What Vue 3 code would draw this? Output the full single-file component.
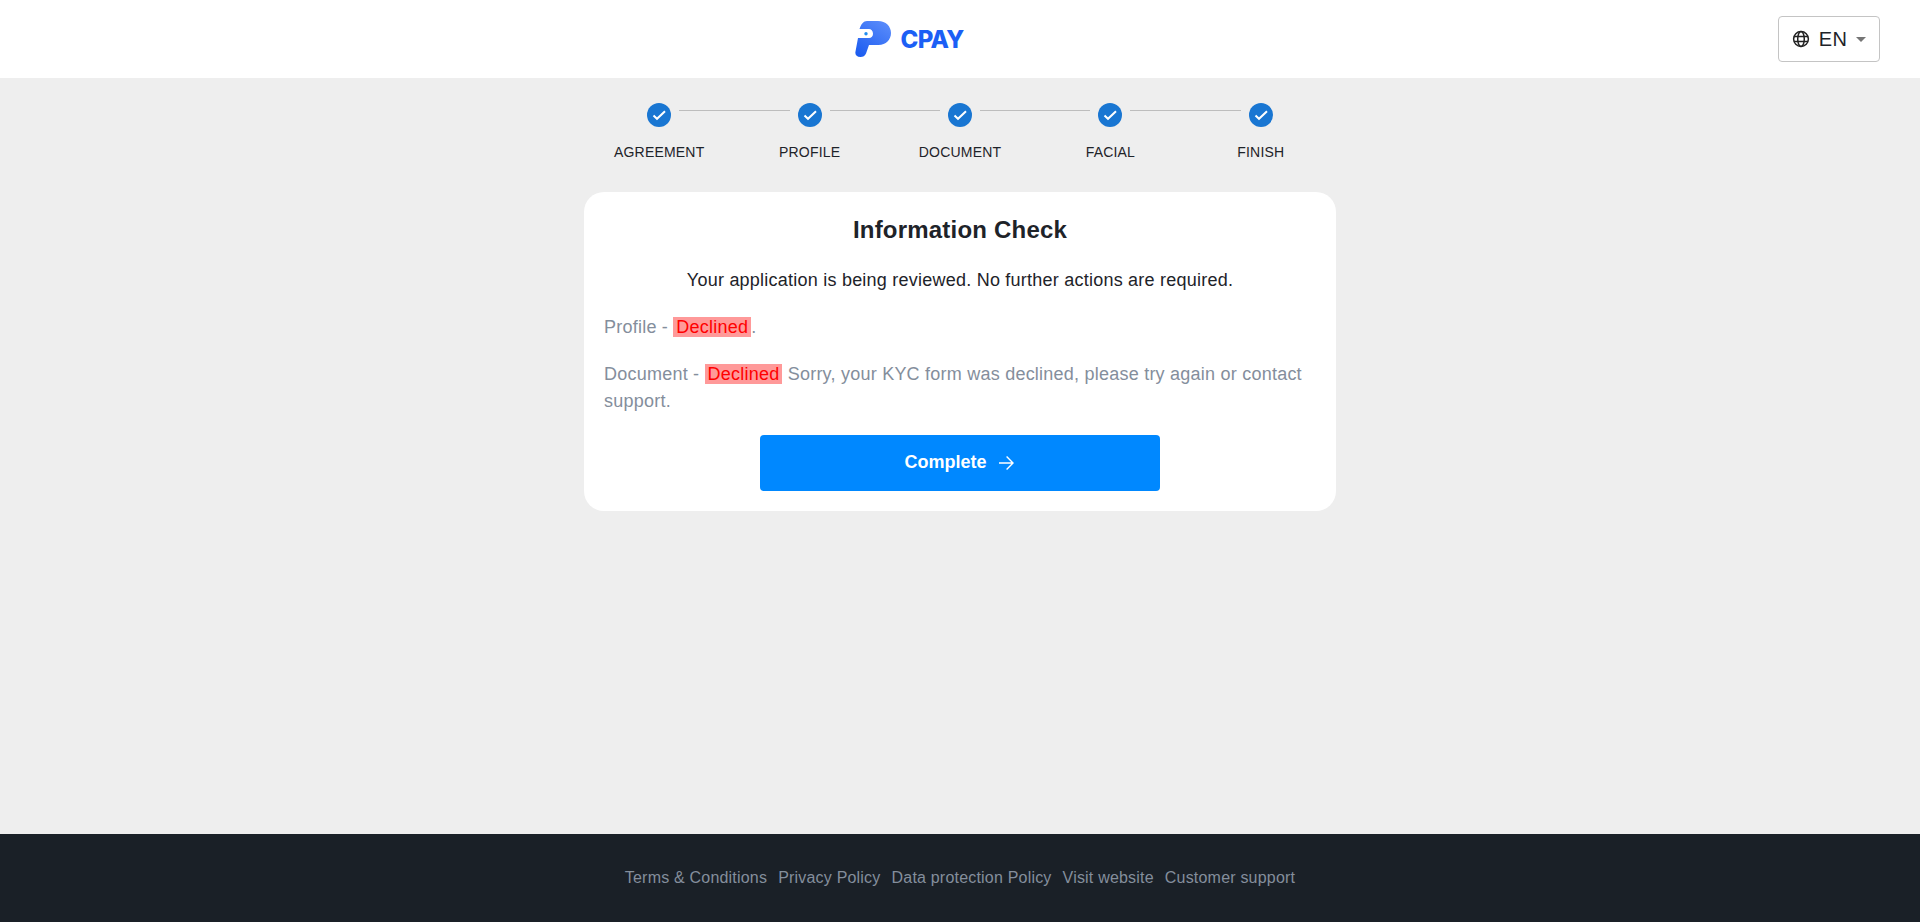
<script setup>
const steps = ['AGREEMENT', 'PROFILE', 'DOCUMENT', 'FACIAL', 'FINISH']
const links = ['Terms & Conditions', 'Privacy Policy', 'Data protection Policy', 'Visit website', 'Customer support']
</script>

<template>
  <div class="page">
    <header class="header">
      <div class="logo">
        <svg width="37" height="36" viewBox="0 0 37 36">
          <defs>
            <linearGradient id="lg" x1="0.85" y1="0" x2="0.2" y2="1">
              <stop offset="0" stop-color="#5a8cfb" />
              <stop offset="1" stop-color="#1d5df0" />
            </linearGradient>
          </defs>
          <path d="M12 0H23C31 0 36 5.5 36 12C36 18.5 31 24 23.5 24H14L11 32.5C10 35 8 36 5.5 36C1.5 36 -0.2 33.5 0.5 30.5L3 17H14C16.5 17 18 15 18 12.7C18 10 16 8 14 8H4.5C6 3 8.5 0 12 0Z" fill="url(#lg)" />
          <circle cx="11" cy="12.7" r="1.7" fill="#1f8cf0" />
        </svg>
        <span class="logo-text">CPAY</span>
      </div>
      <button class="lang">
        <svg width="18" height="18" viewBox="0 0 18 18" fill="none" stroke="#222" stroke-width="1.5">
          <circle cx="9" cy="9" r="7.4" />
          <ellipse cx="9" cy="9" rx="3.3" ry="7.4" />
          <path d="M2 6.4H16M2 11.6H16" />
        </svg>
        <span class="lang-text">EN</span>
        <span class="caret"></span>
      </button>
    </header>

    <main class="main">
      <div class="stepper">
        <div v-for="(s, i) in steps" :key="s" class="step">
          <span v-if="i > 0" class="connector"></span>
          <span class="dot">
            <svg width="24" height="24" viewBox="0 0 24 24">
              <path d="M6.5 12.5L10 15.8L18 8.3" fill="none" stroke="#fff" stroke-width="2" />
            </svg>
          </span>
          <span class="label">{{ s }}</span>
        </div>
      </div>

      <section class="card">
        <h1 class="title">Information Check</h1>
        <p class="lead">Your application is being reviewed. No further actions are required.</p>
        <p class="line first">Profile - <span class="bad">Declined</span>.</p>
        <p class="line">Document - <span class="bad">Declined</span> Sorry, your KYC form was declined, please try again or contact support.</p>
        <div class="actions">
          <button class="cta">
            <span class="cta-text">Complete</span>
            <svg width="16" height="16" viewBox="0 0 16 16" fill="none" stroke="#fff" stroke-width="1.4">
              <path d="M1 8H15M8.6 1.6L15 8L8.6 14.4" />
            </svg>
          </button>
        </div>
      </section>
    </main>

    <footer class="footer">
      <a v-for="l in links" :key="l" class="link">{{ l }}</a>
    </footer>
  </div>
</template>

<style>
html, body { margin: 0; padding: 0; }
</style>

<style scoped>
.page {
  height: 922px;
  display: flex;
  flex-direction: column;
  background: #eeeeee;
  font-family: "Liberation Sans", Arial, sans-serif;
  color: #1e2329;
}
.header {
  height: 78px;
  flex: none;
  background: #fff;
  position: relative;
  display: flex;
  align-items: center;
  justify-content: center;
}
.logo {
  display: flex;
  align-items: center;
  gap: 9px;
  margin-right: 102px;
}
.logo-text {
  font-family: Inter, "Liberation Sans", sans-serif;
  font-weight: 800;
  font-size: 24px;
  color: #1c5ff5;
  letter-spacing: -0.8px;
}
.lang {
  position: absolute;
  right: 40px;
  top: 16px;
  width: 102px;
  height: 46px;
  box-sizing: border-box;
  border: 1px solid #c4c4c4;
  border-radius: 4px;
  background: #fff;
  display: flex;
  align-items: center;
  justify-content: center;
  gap: 9px;
  padding: 0;
  font-family: inherit;
}
.lang-text { font-size: 20px; letter-spacing: 0.3px; color: #1e2329; }
.caret {
  width: 0;
  height: 0;
  border-left: 5px solid transparent;
  border-right: 5px solid transparent;
  border-top: 5px solid #757575;
}
.main {
  flex: 1;
  display: flex;
  flex-direction: column;
  align-items: center;
}
.stepper {
  width: 752px;
  display: grid;
  grid-template-columns: repeat(5, 1fr);
  margin-top: 25px;
  height: 89px;
}
.step {
  position: relative;
  display: flex;
  flex-direction: column;
  align-items: center;
}
.connector {
  position: absolute;
  top: 7px;
  left: calc(-50% + 20px);
  right: calc(50% + 20px);
  border-top: 1px solid #bdbdbd;
}
.dot {
  width: 24px;
  height: 24px;
  border-radius: 50%;
  background: #1976d2;
}
.dot svg { display: block; }
.label {
  margin-top: 16px;
  font-size: 14px;
  line-height: 18px;
  letter-spacing: 0.2px;
  color: #1e2329;
}
.card {
  width: 752px;
  box-sizing: border-box;
  background: #fff;
  border-radius: 20px;
  padding: 20px;
  height: 319px;
}
.title {
  margin: 0;
  text-align: center;
  font-size: 24px;
  line-height: 36px;
  font-weight: 700;
  letter-spacing: 0.2px;
  color: #1e2329;
}
.lead {
  margin: 19px 0 0;
  text-align: center;
  font-size: 18px;
  line-height: 27px;
  letter-spacing: 0.23px;
}
.line {
  margin: 20px 0 0;
  font-size: 18px;
  line-height: 27px;
  letter-spacing: 0.23px;
  color: #848e9c;
}
.bad {
  background: #ff9999;
  color: #ff0000;
  padding: 0 3px;
}
.actions {
  display: flex;
  justify-content: center;
  margin-top: 20px;
}
.cta {
  width: 400px;
  height: 56px;
  border: 0;
  border-radius: 4px;
  background: #0088ff;
  color: #fff;
  font-family: inherit;
  font-weight: 700;
  font-size: 18px;
  display: flex;
  align-items: center;
  justify-content: center;
  gap: 11px;
  padding: 0 2px 0 0;
}
.cta-text { margin-bottom: 2px; }
.footer {
  height: 88px;
  flex: none;
  background: #1a2027;
  display: flex;
  align-items: center;
  justify-content: center;
  gap: 11px;
}
.link {
  font-size: 16px;
  letter-spacing: 0.2px;
  color: #848e9c;
}
</style>
